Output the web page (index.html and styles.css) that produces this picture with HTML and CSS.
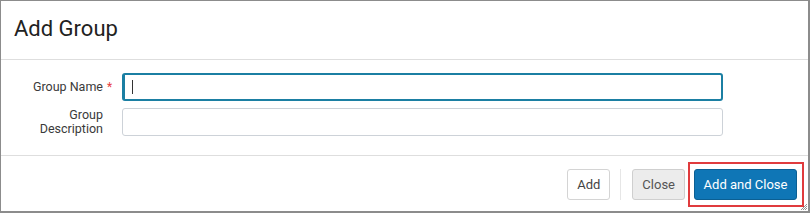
FILE: index.html
```html
<!DOCTYPE html>
<html lang="en">
<head>
  <meta charset="UTF-8">
  <title>Add Group</title>
  <link rel="stylesheet" href="styles.css">
</head>
<body>
  <div class="dialog">
    <div class="dialog-header">
      <h1>Add Group</h1>
    </div>

    <div class="dialog-body">
      <div class="form-row">
        <label for="groupName">Group Name</label>
        <span class="required">*</span>
        <div class="input-wrap">
          <input type="text" id="groupName" class="focused" value="">
          <span class="caret"></span>
        </div>
      </div>
      <div class="form-row">
        <label for="groupDesc">Group<br>Description</label>
        <span class="required"></span>
        <div class="input-wrap">
          <input type="text" id="groupDesc" value="">
        </div>
      </div>
    </div>

    <div class="dialog-footer">
      <button class="btn">Add</button>
      <span class="divider"></span>
      <button class="btn btn-grey">Close</button>
      <span class="highlight">
        <button class="btn btn-primary">Add and Close</button>
      </span>
    </div>

    <svg class="resize" width="6" height="6" viewBox="0 0 6 6">
      <path d="M0 6 L6 0 M2 6 L6 2 M4 6 L6 4" stroke="#777" stroke-width="0.8"/>
    </svg>
  </div>
</body>
</html>
```

FILE: styles.css
```css
body {
  margin: 0;
  font-family: Roboto, "Liberation Sans", Arial, sans-serif;
  background: #fff;
  color: #333;
}
.dialog {
  position: relative;
  box-sizing: border-box;
  width: 810px;
  height: 213px;
  border: 1px solid #8c8c8c;
  border-right-width: 2px;
  border-bottom-width: 2px;
  background: #fff;
}
.dialog-header {
  padding: 15px 13px 17px;
  border-bottom: 1px solid #dedede;
}
.dialog-header h1 {
  margin: 0;
  font-size: 22px;
  line-height: 26px;
  font-weight: 400;
  color: #222;
}
.dialog-body {
  padding: 13px 0 19px;
  display: flex;
  flex-direction: column;
  gap: 7px;
  border-bottom: 1px solid #dedede;
}
.form-row {
  display: grid;
  grid-template-columns: 102px 19px 601px;
  align-items: center;
}
.form-row label {
  text-align: right;
  font-size: 12.5px;
  line-height: 14px;
  color: #3a3a3a;
}
.required {
  color: #e8403f;
  font-size: 12px;
  padding-left: 4px;
  align-self: start;
  margin-top: 7px;
}
.input-wrap {
  position: relative;
  display: flex;
}
.form-row input {
  flex: 1;
  box-sizing: border-box;
  height: 28px;
  border: 1px solid #cdd2d8;
  border-radius: 3px;
  padding: 0 8px;
  font: inherit;
  outline: none;
}
.form-row input.focused {
  border: 2px solid #1b7fa3;
  border-left-width: 3px;
}
.caret {
  position: absolute;
  left: 10px;
  top: 7px;
  width: 1px;
  height: 14px;
  background: #333;
}
.dialog-footer {
  display: flex;
  align-items: center;
  justify-content: flex-end;
  padding: 6px 4px 0 0;
}
.btn {
  box-sizing: border-box;
  height: 31px;
  padding: 0 9px;
  border: 1px solid #d4d4d4;
  border-radius: 3px;
  background: #fff;
  color: #444;
  font-family: inherit;
  font-size: 13px;
  white-space: nowrap;
}
.divider {
  width: 1px;
  height: 31px;
  background: #e6e6e6;
  margin: 0 11px 0 10px;
}
.btn-grey {
  background: #ececec;
  border-color: #cfcfcf;
  color: #555;
  margin-right: 3px;
  padding: 0 9px;
}
.highlight {
  display: flex;
  border: 2px solid #e03b3d;
  padding: 5px 5px 5px 4px;
}
.btn-primary {
  background: #0f76b6;
  border-color: #0b5f93;
  color: #fff;
  width: 103px;
  padding: 0;
}
.resize {
  position: absolute;
  right: 1px;
  bottom: 1px;
}
```
